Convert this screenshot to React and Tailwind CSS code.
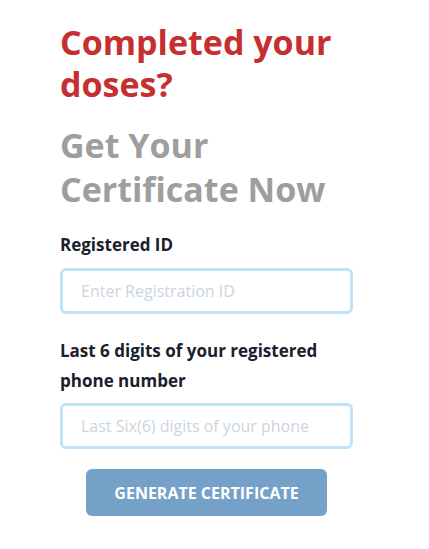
export default function App() {
    return (
        <div className="min-h-screen bg-white" style={{ fontFamily: '"Open Sans", "Noto Sans", sans-serif' }}>
            <div className="ml-[60px] w-[293px] pt-[21px]">
                {/* Headings */}
                <h1 className="text-[34px] leading-[42px] font-bold text-[#c62f2f]">Completed your doses?</h1>
                <h2 className="mt-[18px] text-[34px] leading-[44px] font-bold text-[#9e9e9e]">Get Your Certificate Now</h2>

                {/* Form */}
                <form className="mt-[20px]" onSubmit={(e) => e.preventDefault()}>
                    <label className="block text-[17px] leading-[28px] font-bold text-[#1a202c]">Registered ID</label>
                    <input
                        type="text"
                        placeholder="Enter Registration ID"
                        className="mt-[9px] block w-full h-[46px] px-[18px] rounded-[6px] border-[3px] border-[#bee3f8] text-[16px] text-[#2d3748] placeholder:text-[#cbd5e0] outline-none"
                    />

                    <label className="mt-[22px] block text-[17px] leading-[30px] font-bold text-[#1a202c]">
                        Last 6 digits of your registered phone number
                    </label>
                    <input
                        type="text"
                        placeholder="Last Six(6) digits of your phone"
                        className="mt-[7px] block w-full h-[46px] px-[18px] rounded-[6px] border-[3px] border-[#bee3f8] text-[16px] text-[#2d3748] placeholder:text-[#cbd5e0] outline-none"
                    />

                    <div className="flex justify-center mt-[20px]">
                        <button
                            type="submit"
                            className="w-[241px] h-[47px] rounded-[6px] bg-[#75a1c9] text-white text-[16px] font-bold uppercase"
                        >
                            Generate Certificate
                        </button>
                    </div>
                </form>
            </div>
        </div>
    );
}
